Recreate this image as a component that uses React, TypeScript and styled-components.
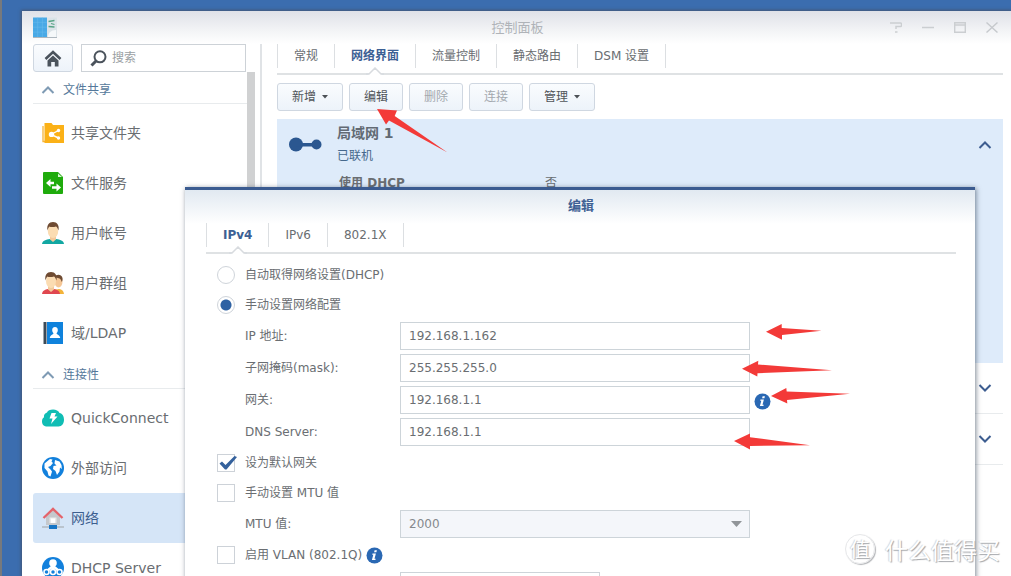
import React from "react";
import styled, { createGlobalStyle, css } from "styled-components";

const GlobalStyle = createGlobalStyle`
  *, *::before, *::after { box-sizing: border-box; }
  body {
    margin: 0;
    overflow: hidden;
    font-family: "DejaVu Sans", "Noto Sans CJK SC", sans-serif;
    font-size: 12px;
    line-height: 18px;
    color: #6a6e72;
  }
  button, input, select { font: inherit; color: inherit; margin: 0; }
  ul { list-style: none; margin: 0; padding: 0; }
  h1, h2, h3, p, dl, dd, dt { margin: 0; font: inherit; }
`;

const Desktop = styled.div`
  position: relative;
  display: flex;
  height: 100vh;
  overflow: hidden;
  padding: 11px 0 0 20px;
  border-left: 2px solid #77797c;
  background: #3b6daf;
`;

const Window = styled.section`
  flex: 1;
  min-width: 0;
  display: flex;
  flex-direction: column;
  background: #fff;
  box-shadow: 0 0 3px 1px rgba(70, 80, 100, 0.8);
`;

const TitleBar = styled.header`
  flex: none;
  display: grid;
  grid-template-columns: 1fr auto 1fr;
  align-items: center;
  height: 33px;
  padding: 0 9px 0 11px;
  background: linear-gradient(#dfe1e8, #f3f4f6 60%, #fff);
`;

const WindowTitle = styled.h1`
  font-size: 13px;
  color: #afb3b8;
`;

const WindowControls = styled.div`
  display: flex;
  justify-content: flex-end;
  gap: 12px;
`;

const ControlButton = styled.button`
  display: flex;
  align-items: center;
  justify-content: center;
  width: 20px;
  height: 20px;
  padding: 0;
  border: 0;
  background: none;
`;

const WindowBody = styled.div`
  flex: 1;
  min-height: 0;
  display: flex;
`;

const Sidebar = styled.aside`
  flex: none;
  display: flex;
  flex-direction: column;
  width: 240px;
  padding-left: 11px;
  border-right: 2px solid #e0e3e6;
`;

const SearchRow = styled.div`
  flex: none;
  display: flex;
  gap: 8px;
  height: 28px;
  padding-right: 14px;
`;

const raised = css`
  border: 1px solid #cfd7e1;
  border-radius: 3px;
  background: linear-gradient(#fafcfe, #edf3fa);
`;

const HomeButton = styled.button`
  ${raised}
  flex: none;
  width: 40px;
  padding: 0;
  display: flex;
  align-items: center;
  justify-content: center;
`;

const SearchBox = styled.label`
  flex: 1;
  min-width: 0;
  display: flex;
  align-items: center;
  gap: 5px;
  padding: 0 8px;
  border: 1px solid #cdd2d7;
  background: #fff;
`;

const SearchInput = styled.input`
  flex: 1;
  min-width: 0;
  padding: 0;
  border: 0;
  outline: 0;
  background: none;
  &::placeholder { color: #9b9fa3; opacity: 1; }
`;

const SidebarScroll = styled.div`
  flex: 1;
  min-height: 0;
  display: flex;
  overflow: hidden;
`;

const SidebarNav = styled.nav`
  flex: 1;
  min-width: 0;
  padding-top: 1px;
`;

const ScrollThumb = styled.div`
  flex: none;
  width: 8px;
  margin-right: 5px;
  background: #d0d1d2;
`;

const Category = styled.button`
  display: flex;
  align-items: center;
  gap: 8px;
  width: 100%;
  height: 31px;
  margin-bottom: 4px;
  padding: 4px 8px 0;
  border: 0;
  border-bottom: 1px solid #e8ebed;
  background: none;
  color: #54789a;
`;

const NavItem = styled.a<{ $active?: boolean }>`
  display: flex;
  align-items: center;
  gap: 7px;
  height: 50px;
  padding-left: 9px;
  border-radius: 3px;
  font-size: 14px;
  text-decoration: none;
  color: ${(p) => (p.$active ? "#3d5f8f" : "#696d71")};
  background: ${(p) => (p.$active ? "#d5e5f7" : "transparent")};
`;

const Main = styled.main`
  flex: 1;
  min-width: 0;
  padding: 0 8px 0 15px;
`;

const TabBar = styled.div`
  display: flex;
  padding-bottom: 5px;
  border-bottom: 2px solid #dfe2e4;
`;

const TabButton = styled.button<{ $active?: boolean }>`
  position: relative;
  height: 24px;
  padding: 0 16px;
  border: 0;
  border-left: 1px solid #dcdfe2;
  background: none;
  white-space: nowrap;
  font-weight: ${(p) => (p.$active ? 700 : 400)};
  color: ${(p) => (p.$active ? "#3c6094" : "#696d71")};
  &:last-child { border-right: 1px solid #dcdfe2; }
`;

const Notch = styled.svg`
  position: absolute;
  left: 50%;
  bottom: -7px;
  margin-left: -9px;
`;

const Toolbar = styled.div`
  display: flex;
  gap: 6px;
  padding: 8px 0;
`;

const ToolButton = styled.button`
  ${raised}
  display: flex;
  align-items: center;
  gap: 6px;
  height: 28px;
  padding: 0 14px;
  color: #50555a;
  &:disabled { color: #a3a8ae; }
`;

const InterfaceRow = styled.article<{ $open?: boolean }>`
  display: flex;
  align-items: flex-start;
  height: ${(p) => (p.$open ? "244px" : "51px")};
  padding: ${(p) => (p.$open ? "5px 11px 0" : "20px 11px 0")};
  border-bottom: ${(p) => (p.$open ? "0" : "1px solid #e8ebed")};
  background: ${(p) => (p.$open ? "#deebfa" : "#fff")};
`;

const LinkIcon = styled.svg`
  flex: none;
  margin: 13px 15px 0 1px;
`;

const InterfaceInfo = styled.div`
  flex: 1;
`;

const InterfaceName = styled.h2`
  font-size: 14px;
  font-weight: 700;
  color: #626a74;
`;

const InterfaceState = styled.p`
  margin-top: 5px;
  color: #46688c;
`;

const Details = styled.dl`
  display: grid;
  grid-template-columns: 206px 1fr;
  margin-top: 9px;
  padding-left: 2px;
  dt { font-weight: 700; }
`;

const ExpandButton = styled.button<{ $open?: boolean }>`
  display: flex;
  margin: ${(p) => (p.$open ? "16px 0 0 auto" : "0 0 0 auto")};
  padding: 0;
  border: 0;
  background: none;
`;

const Dialog = styled.section`
  position: absolute;
  top: 187px;
  left: 183px;
  right: 36px;
  bottom: -40px;
  padding: 0 19px 0 21px;
  border-top: 3px solid #3b5b90;
  background: linear-gradient(#e1e9f1, #fff 34px);
  box-shadow: 1px 1px 5px 0 rgba(40, 55, 75, 0.6);
`;

const DialogTitle = styled.h2`
  height: 33px;
  line-height: 32px;
  font-size: 13px;
  font-weight: 700;
  text-align: center;
  color: #3f6194;
`;

const Form = styled.form`
  padding: 6px 0 0 11px;
`;

const OptionRow = styled.div`
  display: flex;
  align-items: center;
  gap: 10px;
  height: 30px;
`;

const FieldRow = styled.div`
  display: flex;
  align-items: center;
  height: 32px;
  padding-left: 28px;
`;

const FieldLabel = styled.label`
  flex: none;
  width: 155px;
`;

const fieldBox = css`
  height: 28px;
  padding: 0 8px;
  border: 1px solid #cdd4d9;
  border-radius: 0;
  background: #fff;
  outline: 0;
`;

const TextField = styled.input<{ $short?: boolean }>`
  ${fieldBox}
  width: ${(p) => (p.$short ? "200px" : "350px")};
  margin-left: ${(p) => (p.$short ? "155px" : "0")};
`;

const SelectWrap = styled.div`
  display: grid;
  align-items: center;
  width: 350px;
  > * { grid-area: 1 / 1; }
  > svg { justify-self: end; margin-right: 8px; pointer-events: none; }
`;

const SelectField = styled.select`
  ${fieldBox}
  appearance: none;
  width: 100%;
  background: #f4f6fa;
  color: #85898d;
  opacity: 1;
`;

const Radio = styled.input`
  appearance: none;
  flex: none;
  width: 18px;
  height: 18px;
  border: 1px solid #cfd4da;
  border-radius: 50%;
  background: #fff;
  &:checked { background: radial-gradient(circle, #2f62a3 5px, #fff 6px); }
`;

const CheckWrap = styled.span`
  flex: none;
  display: grid;
  width: 18px;
  height: 18px;
  > * { grid-area: 1 / 1; }
  > svg { pointer-events: none; overflow: visible; }
`;

const CheckInput = styled.input`
  appearance: none;
  width: 18px;
  height: 18px;
  border: 1px solid #cdd2d8;
  background: #fff;
`;

const InfoButton = styled.button`
  display: flex;
  margin: 3px 0 0 4px;
  padding: 0;
  border: 0;
  background: none;
`;

const OptionText = styled.span`
  display: flex;
  align-items: center;
  > button { margin-top: 0; }
`;

const Annotations = styled.svg`
  position: absolute;
  top: 0;
  left: -2px;
  pointer-events: none;
`;

const Watermark = styled.div`
  position: absolute;
  right: 11px;
  bottom: 10px;
  display: flex;
  align-items: center;
  gap: 10px;
  font-family: "Noto Sans CJK SC", sans-serif;
  font-size: 23px;
  line-height: 34px;
  color: #fff;
  text-shadow: 1px 1px 1px #a4a7ab, -1px 0 1px #d3d5d8;
  pointer-events: none;
`;

const WatermarkSeal = styled.span`
  display: flex;
  align-items: center;
  justify-content: center;
  width: 30px;
  height: 30px;
  border: 1px solid #e6e7e9;
  border-radius: 50%;
  font-size: 20px;
  box-shadow: 1px 1px 1px #b3b5b8;
`;

const Chevron = ({ up, color = "#3d5d90" }: { up?: boolean; color?: string }) => (
  <svg width="14" height="10" viewBox="0 0 14 10" fill="none" stroke={color} strokeWidth="2">
    <path d={up ? "M1.5 8 7 2.5 12.5 8" : "M1.5 2 7 7.5 12.5 2"} />
  </svg>
);

const Caret = () => (
  <svg width="6" height="4" viewBox="0 0 6 4" fill="#4c5156">
    <path d="M0 0h6L3 3.5z" />
  </svg>
);

const Info = () => (
  <svg width="17" height="17" viewBox="0 0 17 17">
    <circle cx="8.5" cy="8.5" r="8" fill="#2a68b3" />
    <path d="M8.600 3.200h2.300l-.5 2H8.100zM6.500 6.400h3.400l-1.400 5.300h1.200l-.3 1.400H5.900l1.400-5.300H6.200z" fill="#fff" />
  </svg>
);

const PanelIcon = () => (
  <svg width="24" height="21" viewBox="0 0 24 21">
    <path d="M0 .5h14V20H0z" fill="#48a9e6" />
    <path d="M0 5.300h14M0 10.200h14M0 15.100h14M4.700.5V20M9.400.5V20" stroke="#6abaec" strokeWidth=".5" />
    <path d="M14 .5h10V20H14z" fill="#dbe3e8" />
    <path d="M15.500 4.500l6-1M18 6.500l3.500 1M15.500 9.500l6 .5" stroke="#58a487" strokeWidth="1.300" />
    <path d="M15 20c0-4 3-7 8-7v7z" fill="#f5f8fa" />
    <path d="M0 20.500h24" stroke="#9aa6b0" strokeWidth=".8" />
  </svg>
);

const HomeIcon = () => (
  <svg width="18" height="17" viewBox="0 0 18 17">
    <path d="M1.500 9 9 2l7.500 7" fill="none" stroke="#4b535c" strokeWidth="2.600" />
    <path d="M3.500 10.500 9 5.400l5.500 5.100V16.500h-3.700v-4.500H7.200V16.500H3.500z" fill="#4b535c" />
  </svg>
);

const SearchIcon = () => (
  <svg width="17" height="17" viewBox="0 0 17 17" fill="none" stroke="#4b535c">
    <circle cx="10" cy="6.800" r="5.500" strokeWidth="2" />
    <path d="M6 11 1.500 15.500" strokeWidth="3" />
  </svg>
);

const navIcons: Record<string, React.ReactNode> = {
  share: (
    <>
      <path d="M1 4v15.500h2" fill="none" stroke="#f5b43a" strokeWidth="1.300" />
      <path d="M2.500 1h7l1.500 2h11v18H2.500z" fill="#fbb117" />
      <path d="M16.500 8.500 9 12.500l7.500 3.500" fill="none" stroke="#fff" strokeWidth="1.400" />
      <circle cx="9.500" cy="12.400" r="2.700" fill="#fff" />
      <circle cx="16.500" cy="8.500" r="1.700" fill="#fff" />
      <circle cx="16.500" cy="16" r="1.700" fill="#fff" />
    </>
  ),
  file: (
    <>
      <path d="M1 1q0-1 1-1h14l5 5v16q0 1-1 1H2q-1 0-1-1z" fill="#1fab0c" />
      <path d="M16 1.500v3.500h4z" fill="#d9f4d3" />
      <path d="M4 11 8.500 7v2.800H12v2.400H8.500V15zM19 15.500l-4.500-4v2.800H10v2.400h4.500v2.800z" fill="#fff" />
    </>
  ),
  user: (
    <>
      <path d="M0 22c.5-3.500 4-4.500 8-5h6c4 .5 7.500 1.500 8 5z" fill="#12a7a2" />
      <path d="M8 14h6v3.500L11 20l-3-2.500z" fill="#f3c99b" />
      <ellipse cx="11" cy="9" rx="5.200" ry="7" fill="#fbdcb2" />
      <path d="M5.500 8.500C4.500 3 7 0 11 0s6.500 3 5.500 8.500C15.500 6 15 5 14 4.500 11 5.500 8 5 7.500 4.500 6.500 5.500 6 6.500 5.500 8.500z" fill="#6f4b32" />
    </>
  ),
  group: (
    <>
      <path d="M12 22v-4l5-1c3 .5 4.700 2 5 5z" fill="#f3b33a" />
      <ellipse cx="16.500" cy="9.500" rx="4" ry="6" fill="#f5c797" />
      <path d="M12.500 5C14 2 19.500 2 20.500 6c.3 2-.2 3-.8 4-.4-2-1.200-3-2.200-3.500z" fill="#6f4b32" />
      <path d="M0 22c.5-3.500 3-4.500 6-5h6c3 .5 5.500 1.500 6 5z" fill="#e0474f" />
      <path d="M6 14h6v3.500L9 20l-3-2.500z" fill="#f3c99b" />
      <ellipse cx="9" cy="9" rx="5" ry="7" fill="#fbdcb2" />
      <path d="M3.500 8.500C2.500 3 5 0 9 0s6.500 3 5.500 8.500C13.500 6 13 5 12 4.500 9 5.500 6 5 5.500 4.500 4.500 5.500 4 6.500 3.500 8.500z" fill="#6f4b32" />
    </>
  ),
  domain: (
    <>
      <path d="M1.500 0h3v22h-3z" fill="#3d4a57" />
      <path d="M5 0h16v22H5z" fill="#0f82dc" />
      <path d="M13 5c2 0 3 1.500 2.800 3.500-.2 1.500-.8 2-1.300 2.800.2 1.500 3.500 1.700 3.700 4.700H7.800c.2-3 3.500-3.200 3.700-4.700-.5-.8-1.100-1.300-1.300-2.800C10 6.500 11 5 13 5z" fill="#fff" />
    </>
  ),
  quick: (
    <>
      <path d="M5 5.500C6 1.500 16 1 17.500 6c3 .5 4.500 3.500 4.500 6.500 0 4-2 7-5.500 7h-11C2 19.500 0 17.500 0 14.500c0-2 .8-3.500 2-4.200C1.500 8 3 6 5 5.500z" fill="#10bdb4" />
      <path d="M9.500 6h4.500L12.500 9.500h3L9 17l1.500-5.500h-3z" fill="#fff" />
    </>
  ),
  globe: (
    <>
      <circle cx="11" cy="11" r="11" fill="#1280dc" />
      <path d="M2.500 6.500 8 2l2.500.5-1 2L11 6 8.500 9 6 10l2.500 2.500 1.500 2-1.500 5-2-1-1-4-3-3.500zM13 3l4.500 1.500 2 3.500.3 4-1.800-1.500-.5 4-2.500 3.500-1.500-4-2.500-2 .5-3 3-.5-2-2z" fill="#fff" />
    </>
  ),
  network: (
    <>
      <path d="M4 10v8h14v-8l-7-7z" fill="#c5c8cc" />
      <path d="M7.500 10.500h7V16h-7z" fill="#e9eaeb" />
      <path d="M9 11.500h4V16H9z" fill="#fff" />
      <path d="M1.500 11 11 2l9.500 9" fill="none" stroke="#e4636a" strokeWidth="2.400" />
      <path d="M0 20h22" stroke="#a9adb2" strokeWidth="1.200" />
      <path d="M7 18h8v4H7z" fill="#1976c5" />
    </>
  ),
  dhcp: (
    <>
      <circle cx="11" cy="11" r="11" fill="#1280dc" />
      <path d="M11 7v7M11 9 5 14M11 9l6 5" stroke="#fff" strokeWidth="2.500" />
      <circle cx="11" cy="6" r="3.800" fill="#fff" />
      <circle cx="4.500" cy="15" r="2.500" fill="#1280dc" stroke="#fff" strokeWidth="1.500" />
      <circle cx="11" cy="15" r="2.500" fill="#1280dc" stroke="#fff" strokeWidth="1.500" />
      <circle cx="17.500" cy="15" r="2.500" fill="#1280dc" stroke="#fff" strokeWidth="1.500" />
    </>
  ),
};

const sections = [
  {
    title: "文件共享",
    items: [
      ["share", "共享文件夹"],
      ["file", "文件服务"],
      ["user", "用户帐号"],
      ["group", "用户群组"],
      ["domain", "域/LDAP"],
    ],
  },
  {
    title: "连接性",
    items: [
      ["quick", "QuickConnect"],
      ["globe", "外部访问"],
      ["network", "网络"],
      ["dhcp", "DHCP Server"],
    ],
  },
];

const Tabs = ({ labels, active }: { labels: string[]; active: string }) => (
  <TabBar role="tablist">
    {labels.map((label) => (
      <TabButton key={label} type="button" role="tab" aria-selected={label === active} $active={label === active}>
        {label}
        {label === active && (
          <Notch width="18" height="8" viewBox="0 0 18 8">
            <path d="M2 8 9 1l7 7z" fill="#fff" />
            <path d="M0 7h3l6-6 6 6h3" fill="none" stroke="#d8dbdf" strokeWidth="1.500" />
          </Notch>
        )}
      </TabButton>
    ))}
  </TabBar>
);

const CheckBox = ({ id, checked }: { id: string; checked?: boolean }) => (
  <CheckWrap>
    <CheckInput type="checkbox" id={id} defaultChecked={checked} />
    {checked && (
      <svg width="18" height="18" viewBox="0 0 18 18">
        <path d="M2.500 9.500 5 7.500l3.500 3.500L17.500 2l2.500 1L9.500 15.500H8z" fill="#34619c" />
      </svg>
    )}
  </CheckWrap>
);

const fields = [
  { id: "ip", label: "IP 地址:", value: "192.168.1.162" },
  { id: "mask", label: "子网掩码(mask):", value: "255.255.255.0" },
  { id: "gateway", label: "网关:", value: "192.168.1.1", info: true },
  { id: "dns", label: "DNS Server:", value: "192.168.1.1" },
];

const toolbar = [
  { label: "新增", menu: true },
  { label: "编辑" },
  { label: "删除", disabled: true },
  { label: "连接", disabled: true },
  { label: "管理", menu: true },
];

const arrows = [
  "377,109 397,110.500 394.700,116 447.500,152.500 389,120.500 386,124.500",
  "766,331.700 781.700,324 781.700,328 821.500,330.700 782,335 782,339.700",
  "742,368.700 758.300,360.700 758,364.500 832,370.300 757.500,373.300 757.300,376.500",
  "771,396 786.300,388 786.700,391.500 850,393.700 787,400 787.300,403.500",
  "734,441 750,433.500 750,437.200 810,445.200 750,446 750,449.500",
];

export default function App() {
  return (
    <Desktop lang="zh-CN">
      <GlobalStyle />
      <Window>
        <TitleBar>
          <PanelIcon />
          <WindowTitle>控制面板</WindowTitle>
          <WindowControls>
            <ControlButton aria-label="帮助">
              <svg width="12" height="11" viewBox="0 0 12 11" fill="none" stroke="#cbced1" strokeWidth="1.500">
                <path d="M0 1h10.500q1 0 1 1v1.500q0 1-1 1H6v2.500M5 10h2.500" />
              </svg>
            </ControlButton>
            <ControlButton aria-label="最小化">
              <svg width="12" height="11" viewBox="0 0 12 11" stroke="#cbced1" strokeWidth="1.500">
                <path d="M0 5.500h12" />
              </svg>
            </ControlButton>
            <ControlButton aria-label="最大化">
              <svg width="12" height="11" viewBox="0 0 12 11" fill="none" stroke="#cbced1" strokeWidth="1.400">
                <path d="M.7.700h10.600v9.600H.7zM.7 3h10.600" />
              </svg>
            </ControlButton>
            <ControlButton aria-label="关闭">
              <svg width="12" height="11" viewBox="0 0 12 11" stroke="#c6c9cd" strokeWidth="1.400">
                <path d="M.5.500l11 10M11.500.5l-11 10" />
              </svg>
            </ControlButton>
          </WindowControls>
        </TitleBar>
        <WindowBody>
          <Sidebar>
            <SearchRow>
              <HomeButton aria-label="主页">
                <HomeIcon />
              </HomeButton>
              <SearchBox>
                <SearchIcon />
                <SearchInput type="text" placeholder="搜索" aria-label="搜索" />
              </SearchBox>
            </SearchRow>
            <SidebarScroll>
              <SidebarNav>
                {sections.map((section) => (
                  <React.Fragment key={section.title}>
                    <Category>
                      <Chevron up color="#7f9bb4" />
                      {section.title}
                    </Category>
                    <ul>
                      {section.items.map(([icon, label]) => (
                        <li key={label}>
                          <NavItem href="#" $active={icon === "network"}>
                            <svg width="22" height="22" viewBox="0 0 22 22">
                              {navIcons[icon]}
                            </svg>
                            {label}
                          </NavItem>
                        </li>
                      ))}
                    </ul>
                  </React.Fragment>
                ))}
              </SidebarNav>
              <ScrollThumb />
            </SidebarScroll>
          </Sidebar>
          <Main>
            <Tabs labels={["常规", "网络界面", "流量控制", "静态路由", "DSM 设置"]} active="网络界面" />
            <Toolbar>
              {toolbar.map((item) => (
                <ToolButton key={item.label} type="button" disabled={item.disabled}>
                  {item.label}
                  {item.menu && <Caret />}
                </ToolButton>
              ))}
            </Toolbar>
            <InterfaceRow $open>
              <LinkIcon width="33" height="15" viewBox="0 0 33 15" fill="#2b5790">
                <circle cx="7" cy="7.500" r="7" />
                <circle cx="27.500" cy="7.500" r="5" />
                <path d="M7 6h20v3.500H7z" />
              </LinkIcon>
              <InterfaceInfo>
                <InterfaceName>局域网 1</InterfaceName>
                <InterfaceState>已联机</InterfaceState>
                <Details>
                  <dt>使用 DHCP</dt>
                  <dd>否</dd>
                </Details>
              </InterfaceInfo>
              <ExpandButton $open aria-label="收起">
                <Chevron up />
              </ExpandButton>
            </InterfaceRow>
            <InterfaceRow>
              <ExpandButton aria-label="展开">
                <Chevron />
              </ExpandButton>
            </InterfaceRow>
            <InterfaceRow>
              <ExpandButton aria-label="展开">
                <Chevron />
              </ExpandButton>
            </InterfaceRow>
          </Main>
        </WindowBody>
      </Window>

      <Dialog role="dialog" aria-label="编辑">
        <DialogTitle>编辑</DialogTitle>
        <Tabs labels={["IPv4", "IPv6", "802.1X"]} active="IPv4" />
        <Form>
          <OptionRow>
            <Radio type="radio" name="mode" id="auto" />
            <label htmlFor="auto">自动取得网络设置(DHCP)</label>
          </OptionRow>
          <OptionRow>
            <Radio type="radio" name="mode" id="manual" defaultChecked />
            <label htmlFor="manual">手动设置网络配置</label>
          </OptionRow>
          {fields.map((field) => (
            <FieldRow key={field.id}>
              <FieldLabel htmlFor={field.id}>{field.label}</FieldLabel>
              <TextField id={field.id} type="text" defaultValue={field.value} />
              {field.info && (
                <InfoButton type="button" aria-label="说明">
                  <Info />
                </InfoButton>
              )}
            </FieldRow>
          ))}
          <OptionRow>
            <CheckBox id="default-gateway" checked />
            <label htmlFor="default-gateway">设为默认网关</label>
          </OptionRow>
          <OptionRow>
            <CheckBox id="manual-mtu" />
            <label htmlFor="manual-mtu">手动设置 MTU 值</label>
          </OptionRow>
          <FieldRow>
            <FieldLabel htmlFor="mtu">MTU 值:</FieldLabel>
            <SelectWrap>
              <SelectField id="mtu" disabled defaultValue="2000">
                <option>2000</option>
              </SelectField>
              <svg width="11" height="6" viewBox="0 0 11 6" fill="#919599">
                <path d="M0 0h11L5.500 6z" />
              </svg>
            </SelectWrap>
          </FieldRow>
          <OptionRow>
            <CheckBox id="vlan" />
            <OptionText>
              <label htmlFor="vlan">启用 VLAN (802.1Q)</label>
              <InfoButton type="button" aria-label="说明">
                <Info />
              </InfoButton>
            </OptionText>
          </OptionRow>
          <FieldRow>
            <TextField type="text" aria-label="VLAN ID" $short />
          </FieldRow>
        </Form>
      </Dialog>

      <Annotations width="1011" height="576" viewBox="0 0 1011 576" fill="#f33a38" aria-hidden="true">
        {arrows.map((points) => (
          <polygon key={points} points={points} />
        ))}
      </Annotations>
      <Watermark>
        <WatermarkSeal>值</WatermarkSeal>
        什么值得买
      </Watermark>
    </Desktop>
  );
}
